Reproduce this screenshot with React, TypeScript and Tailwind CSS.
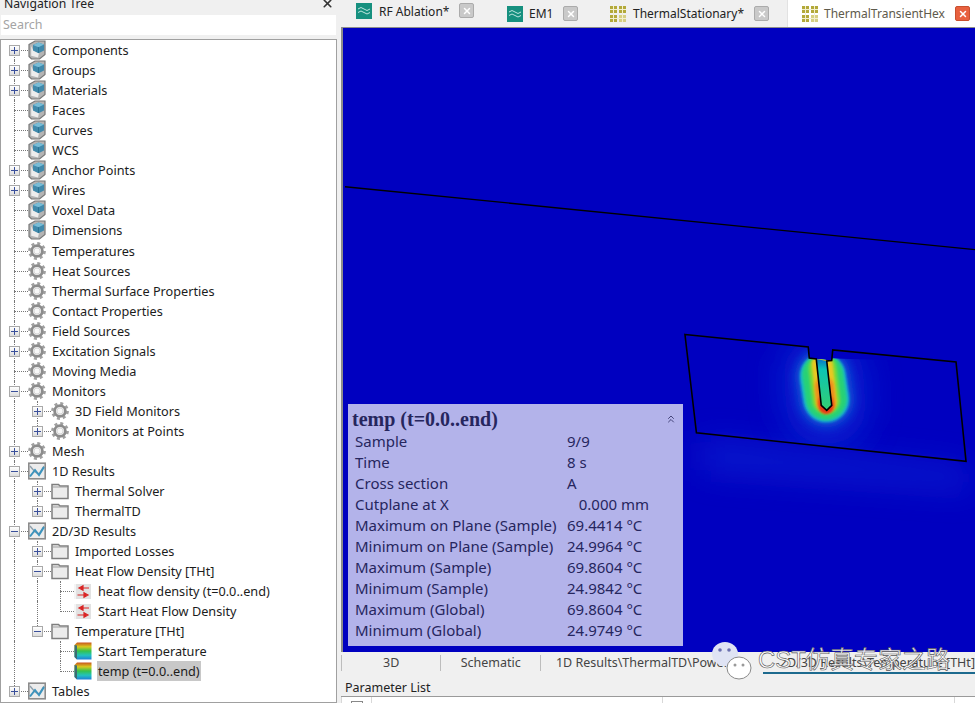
import React from "react";
import { X, ChevronsUp } from "lucide-react";

type IconKind = "cube" | "gear" | "chart" | "folder" | "flow" | "temp";

interface TreeItem {
  label: string;
  level: 0 | 1 | 2;
  icon: IconKind;
  exp?: "+" | "-";
  sub?: "full" | "half";
  leaf?: "full" | "half";
  selected?: boolean;
}

const items: TreeItem[] = [
  { label: "Components", level: 0, icon: "cube", exp: "+" },
  { label: "Groups", level: 0, icon: "cube", exp: "+" },
  { label: "Materials", level: 0, icon: "cube", exp: "+" },
  { label: "Faces", level: 0, icon: "cube" },
  { label: "Curves", level: 0, icon: "cube" },
  { label: "WCS", level: 0, icon: "cube" },
  { label: "Anchor Points", level: 0, icon: "cube", exp: "+" },
  { label: "Wires", level: 0, icon: "cube", exp: "+" },
  { label: "Voxel Data", level: 0, icon: "cube" },
  { label: "Dimensions", level: 0, icon: "cube" },
  { label: "Temperatures", level: 0, icon: "gear" },
  { label: "Heat Sources", level: 0, icon: "gear" },
  { label: "Thermal Surface Properties", level: 0, icon: "gear" },
  { label: "Contact Properties", level: 0, icon: "gear" },
  { label: "Field Sources", level: 0, icon: "gear", exp: "+" },
  { label: "Excitation Signals", level: 0, icon: "gear", exp: "+" },
  { label: "Moving Media", level: 0, icon: "gear" },
  { label: "Monitors", level: 0, icon: "gear", exp: "-" },
  { label: "3D Field Monitors", level: 1, icon: "gear", exp: "+", sub: "full" },
  { label: "Monitors at Points", level: 1, icon: "gear", exp: "+", sub: "half" },
  { label: "Mesh", level: 0, icon: "gear", exp: "+" },
  { label: "1D Results", level: 0, icon: "chart", exp: "-" },
  { label: "Thermal Solver", level: 1, icon: "folder", exp: "+", sub: "full" },
  { label: "ThermalTD", level: 1, icon: "folder", exp: "+", sub: "half" },
  { label: "2D/3D Results", level: 0, icon: "chart", exp: "-" },
  { label: "Imported Losses", level: 1, icon: "folder", exp: "+", sub: "full" },
  { label: "Heat Flow Density [THt]", level: 1, icon: "folder", exp: "-", sub: "full" },
  { label: "heat flow density (t=0.0..end)", level: 2, icon: "flow", sub: "full", leaf: "full" },
  { label: "Start Heat Flow Density", level: 2, icon: "flow", sub: "full", leaf: "half" },
  { label: "Temperature [THt]", level: 1, icon: "folder", exp: "-", sub: "half" },
  { label: "Start Temperature", level: 2, icon: "temp", leaf: "full" },
  { label: "temp (t=0.0..end)", level: 2, icon: "temp", leaf: "half", selected: true },
  { label: "Tables", level: 0, icon: "chart", exp: "+" },
];

const readout = [
  ["Sample", "9/9"],
  ["Time", "8 s"],
  ["Cross section", "A"],
  ["Cutplane at X", "   0.000 mm"],
  ["Maximum on Plane (Sample)", "69.4414 °C"],
  ["Minimum on Plane (Sample)", "24.9964 °C"],
  ["Maximum (Sample)", "69.8604 °C"],
  ["Minimum (Sample)", "24.9842 °C"],
  ["Maximum (Global)", "69.8604 °C"],
  ["Minimum (Global)", "24.9749 °C"],
];

function TreeIcon({ kind }: { kind: IconKind }) {
  if (kind === "cube") {
    return (
      <svg width="18" height="20" viewBox="0 0 18 20">
        <path d="M1 4.5 L7 1 H17 V14.5 L11.5 19 H3.5 L1 16.5 Z" fill="#b4b4b4" stroke="#777777" strokeWidth="1.2" />
        <path d="M3.2 6 V15.8 L10 17.6 L11 13 L5 10 Z" fill="#ededed" />
        <path d="M5 5 L10.5 2.5 L16 4.5 V10.5 L10.5 13.2 L5 10.5 Z" fill="#4089ab" />
        <path d="M5 5 L10.5 7.2 L16 4.5 L10.5 2.5 Z" fill="#78bcd6" />
        <path d="M10.5 7.2 V13" stroke="#2a7394" />
      </svg>
    );
  }
  if (kind === "gear") {
    return (
      <svg width="18" height="18" viewBox="0 0 18 18">
        <circle cx="9" cy="9" r="7.6" fill="none" stroke="#a0a0a0" strokeWidth="2.6" strokeDasharray="3 2.97" />
        <circle cx="9" cy="9" r="5.4" fill="#f0f0f0" stroke="#8c8c8c" strokeWidth="2.8" />
        <circle cx="9" cy="9" r="3" fill="#f8f8f8" stroke="#cfcfcf" strokeWidth="0.8" />
      </svg>
    );
  }
  if (kind === "chart") {
    return (
      <svg width="18" height="18" viewBox="0 0 18 18">
        <rect x="0.8" y="1.2" width="16.4" height="15.6" fill="#ececec" stroke="#8c8c8c" strokeWidth="1.6" />
        <path d="M2 4 L7 10 L11 12 L16 4" fill="none" stroke="#8fa0ac" strokeWidth="1.4" />
        <path d="M2 14.5 L7 8 L11 13 L16 5" fill="none" stroke="#3c93bd" strokeWidth="2" />
      </svg>
    );
  }
  if (kind === "folder") {
    return (
      <svg width="18" height="18" viewBox="0 0 18 18">
        <path d="M1 16.5 V2.5 H7.5 L9 4 H17 V16.5 Z" fill="#ececec" stroke="#7f7f7f" strokeWidth="1.5" />
        <path d="M2 5 H16" stroke="#9d9d9d" />
      </svg>
    );
  }
  if (kind === "flow") {
    return (
      <svg width="18" height="18" viewBox="0 0 18 18">
        <path d="M1 2 H17 V17 H1 Z" fill="#e2e2e2" />
        <path d="M1 2 V17" stroke="#f5f5f5" strokeWidth="2" />
        <path d="M15 6 H8 M5 6 L9 3.8 V8.2 Z" stroke="#d92525" fill="#d92525" strokeWidth="1.2" />
        <path d="M3.5 13 H10 M14 13 L10 10.8 V15.2 Z" stroke="#d92525" fill="#d92525" strokeWidth="1.2" />
      </svg>
    );
  }
  return (
    <svg width="18" height="18" viewBox="0 0 18 18">
      <defs>
        <linearGradient id="rainbow" x1="0" y1="0" x2="0" y2="1">
          <stop offset="0" stopColor="#c9541c" />
          <stop offset="0.25" stopColor="#d8c91e" />
          <stop offset="0.5" stopColor="#35c24c" />
          <stop offset="0.75" stopColor="#22c3bd" />
          <stop offset="1" stopColor="#1f7fd8" />
        </linearGradient>
      </defs>
      <path d="M0.5 3 L3 0.5 H17.5 V17.5 H3 L0.5 15 Z" fill="url(#rainbow)" />
      <path d="M0.5 3 L3 3.5 V17.5 L0.5 15 Z" fill="#3b6d73" />
    </svg>
  );
}

function Expander({ sign }: { sign: "+" | "-" }) {
  return (
    <span className="relative flex h-[11px] w-[11px] items-center justify-center border border-[#a9a9a9] bg-gradient-to-b from-white to-[#dcdcdc]">
      <span className="h-px w-[7px] bg-[#3a4f9a]" />
      {sign === "+" && <span className="absolute h-[7px] w-px bg-[#3a4f9a]" />}
    </span>
  );
}

function TreeRow({ item, index }: { item: TreeItem; index: number }) {
  const isLast = index === items.length - 1;
  const padding = item.level === 0 ? "pl-[27px]" : item.level === 1 ? "pl-[50px]" : "pl-[73px]";
  const connector = item.level === 0 ? "left-[13px]" : item.level === 1 ? "left-[36px]" : "left-[59px]";
  const expanderPos = item.level === 0 ? "left-[8px]" : "left-[31px]";
  const line = "absolute w-0 border-l border-dotted border-[#777]";

  return (
    <div className={`relative flex items-center ${padding} ${index === 9 ? "h-[21px] pb-px" : "h-5"}`}>
      <span className={`${line} left-[13px] ${isLast ? "top-0 h-[11px]" : index === 0 ? "top-[10px] bottom-0" : "inset-y-0"}`} />
      {item.sub && <span className={`${line} left-[36px] top-0 ${item.sub === "half" ? "h-[11px]" : "bottom-0"}`} />}
      {item.leaf && <span className={`${line} left-[59px] top-0 ${item.leaf === "half" ? "h-[11px]" : "bottom-0"}`} />}
      <span className={`absolute top-[10px] h-0 w-[14px] border-t border-dotted border-[#777] ${connector}`} />
      {item.exp && (
        <span className={`absolute top-[5px] ${expanderPos}`}>
          <Expander sign={item.exp} />
        </span>
      )}
      <span className="relative flex w-[18px] items-center justify-center">
        <TreeIcon kind={item.icon} />
      </span>
      <span className={`ml-[5px] h-5 whitespace-nowrap px-px text-[12.7px] leading-5 text-[#1c1c1c] ${item.selected ? "bg-[#c8c8c8]" : ""}`}>
        {item.label}
      </span>
    </div>
  );
}

function WaveIcon() {
  return (
    <svg width="16" height="16" viewBox="0 0 16 16" className="shrink-0">
      <rect width="16" height="16" fill="#16907f" />
      <path d="M2 6 Q5 3 8 6 T14 6 M2 9.5 Q5 6.5 8 9.5 T14 9.5" fill="none" stroke="#bfe6df" strokeWidth="1" />
    </svg>
  );
}

function GridIcon() {
  return (
    <svg width="16" height="16" viewBox="0 0 16 16" className="shrink-0">
      <path d="M0 0 H7 V7 H0 Z M9 0 H16 V7 H9 Z M0 9 H7 V16 H0 Z" fill="#b3a93a" />
      <path d="M9 9 H16 V16 H9 Z" fill="#d6cf83" />
      <path d="M3.5 0 V16 M12.5 0 V16 M0 3.5 H16 M0 12.5 H16" stroke="#f3f0cf" strokeWidth="1" />
    </svg>
  );
}

function CloseBox({ active }: { active?: boolean }) {
  return (
    <span className={`flex h-[15px] w-[15px] shrink-0 items-center justify-center rounded-[2px] border ${active ? "border-[#c9502f] bg-[#e8613f]" : "border-[#ababab] bg-[#c9c9c9]"}`}>
      <X size={10} strokeWidth={3.5} color="#ffffff" />
    </span>
  );
}

function TabBar() {
  return (
    <div className="flex h-[27px] shrink-0 whitespace-nowrap bg-[#f0f0f0] text-[12px] text-[#222]">
      <div className="flex w-[166px] items-start pl-[15px] pt-[3px]">
        <WaveIcon />
        <span className="ml-[7px] w-[80px] leading-[18px]">RF Ablation*</span>
        <CloseBox />
      </div>
      <div className="flex w-[103px] items-start pt-[6px]">
        <WaveIcon />
        <span className="ml-[6px] w-[34px] leading-4">EM1</span>
        <CloseBox />
      </div>
      <div className="flex w-[177px] items-start pt-[6px]">
        <GridIcon />
        <span className="ml-[7px] w-[121px] leading-4">ThermalStationary*</span>
        <CloseBox />
      </div>
      <div className="flex flex-1 items-start border-l border-[#e2e2e2] bg-white pl-[14px] pt-[6px] text-[#5e5a4c]">
        <GridIcon />
        <span className="ml-[6px] w-[131px] leading-4">ThermalTransientHex</span>
        <CloseBox active />
      </div>
    </div>
  );
}

function FieldPlot() {
  const outline = "M684.5 334 L808 346.5 L809 357.5 L816 358.5 L821 405 L826.5 410 L831.5 405 L826.5 360.5 L831.5 360 L832.5 349.5 L956 361.5 L966 461 L696 432.5 Z";
  const region = { filterUnits: "userSpaceOnUse" as const, x: 342, y: 27, width: 633, height: 625 };
  // heat bands around the slot, widest first, each ends in a round cap
  const bands = [
    { d: "M822.5 376 L826 399", w: 56, c: "#0a48d4", f: "url(#b4)" },
    { d: "M822.5 376 L826 399", w: 46, c: "#16b8d0", f: "url(#b15)" },
    { d: "M822.5 374 L826 399", w: 41, c: "#26d276", f: "url(#b15)" },
    { d: "M822.3 368 L826 400", w: 28, c: "#7cda38", f: "url(#b15)" },
    { d: "M822 364 L826 401", w: 21, c: "#e8c820", f: "url(#b1)" },
    { d: "M824 386 L826 403", w: 19, c: "#ee8a1c", f: "url(#b15)" },
    { d: "M825.5 402 L826 406", w: 15, c: "#e63a14", f: "url(#b1)" },
  ];
  return (
    <svg className="absolute inset-0 h-full w-full" viewBox="342 27 633 625" preserveAspectRatio="none">
      <defs>
        <filter id="b1" {...region}><feGaussianBlur stdDeviation="1" /></filter>
        <filter id="b15" {...region}><feGaussianBlur stdDeviation="1.5" /></filter>
        <filter id="b4" {...region}><feGaussianBlur stdDeviation="4" /></filter>
        <filter id="b16" {...region}><feGaussianBlur stdDeviation="16" /></filter>
        <filter id="b20" {...region}><feGaussianBlur stdDeviation="18" /></filter>
        <clipPath id="part">
          <path d="M684.5 334 L808 346.5 L809 357.5 L816 358.5 L831.5 360 L832.5 358 L956 361.5 L966 461 L696 432.5 Z" />
        </clipPath>
        <linearGradient id="slot" x1="0" y1="0" x2="0" y2="1">
          <stop offset="0" stopColor="#0a70c8" />
          <stop offset="0.2" stopColor="#0cc4b4" />
          <stop offset="1" stopColor="#34d070" />
        </linearGradient>
      </defs>
      <rect x="342" y="27" width="633" height="625" fill="#0000c0" />
      <path d="M700 440 L966 468 L975 490 L700 470 Z" fill="#1434dc" opacity="0.5" filter="url(#b16)" />
      <g clipPath="url(#part)">
        <path d="M823 375 L826 405" stroke="#0a30d8" strokeWidth="80" strokeLinecap="round" opacity="0.75" filter="url(#b20)" />
        <g fill="none" strokeLinecap="round">
          {bands.map((b) => (
            <path key={b.c} d={b.d} stroke={b.c} strokeWidth={b.w} filter={b.f} />
          ))}
        </g>
      </g>
      <path d="M816 358.5 L826.5 360.5 L831.5 405 L826.5 410 L821 405 Z" fill="url(#slot)" />
      <path d="M344 186 L975 249" stroke="#000000" strokeWidth="1.3" fill="none" />
      <path d={outline} stroke="#000000" strokeWidth="1.6" fill="none" strokeLinejoin="miter" />
    </svg>
  );
}

function ReadoutPanel() {
  return (
    <div className="absolute left-[5px] top-[376px] h-[242px] w-[335px] bg-[#b3b3ea] pl-[7px] pt-[4px] text-[#26265e]">
      <div className="flex items-center justify-between pr-[6px]">
        <span className="-ml-[3px] text-[20px] font-bold leading-[22px] [font-family:'Liberation_Serif',serif]">temp (t=0.0..end)</span>
        <ChevronsUp size={12} strokeWidth={2} className="text-[#45457a]" />
      </div>
      <div className="mt-[1px] grid grid-cols-[212px_1fr] text-[15px] leading-[21px]">
        {readout.map(([k, v]) => (
          <React.Fragment key={k}>
            <span className="whitespace-nowrap">{k}</span>
            <span className="whitespace-pre">{v}</span>
          </React.Fragment>
        ))}
      </div>
    </div>
  );
}

function Watermark() {
  return (
    <div className="absolute left-[704px] top-[640px] flex items-center">
      <svg width="52" height="46" viewBox="0 0 52 46">
        <ellipse cx="21" cy="14" rx="13" ry="12" fill="#dfe3f4" />
        <ellipse cx="35" cy="28" rx="12" ry="11" fill="#ffffff" stroke="#8a8a8a" strokeWidth="1" />
        <circle cx="16" cy="10" r="1.8" fill="#6a6fb0" />
        <circle cx="25" cy="10" r="1.8" fill="#6a6fb0" />
        <circle cx="31" cy="25" r="1.5" fill="#9a9a9a" />
        <circle cx="39" cy="25" r="1.5" fill="#9a9a9a" />
      </svg>
      <span className="mb-[6px] ml-[2px] whitespace-nowrap text-[24px] leading-[30px] text-white/90 [-webkit-text-stroke:0.6px_#555] [font-family:'Liberation_Sans','Noto_Sans_CJK_SC',sans-serif]">
        CST仿真专家之路
      </span>
    </div>
  );
}

export default function App() {
  return (
    <div className="relative flex h-[703px] w-[975px] overflow-hidden bg-[#f0f0f0] [font-family:'Noto_Sans',sans-serif]">
      <aside className="flex w-[337px] shrink-0 flex-col">
        <div className="flex h-[15px] shrink-0 items-start justify-between overflow-hidden pl-[4px] pr-[3px]">
          <span className="-mt-[3px] text-[12.2px] leading-[14px] text-[#222]">Navigation Tree</span>
          <X size={13} strokeWidth={3} className="-mt-[3px] text-[#333]" />
        </div>
        <div className="mx-px h-[20px] shrink-0 bg-white pl-[2px] text-[12.5px] leading-5 text-[#a4a4a4]">Search</div>
        <div className="mt-[4px] flex-1 border border-[#a0a0a0] bg-white">
          {items.map((item, i) => (
            <TreeRow key={item.label} item={item} index={i} />
          ))}
        </div>
      </aside>
      <main className="ml-[4px] flex min-w-0 flex-1 flex-col">
        <TabBar />
        <div className="relative h-[625px] shrink-0 border-l-2 border-t border-[#8c8c8c]">
          <FieldPlot />
          <ReadoutPanel />
        </div>
        <div className="flex h-[22px] shrink-0 items-center overflow-hidden whitespace-nowrap text-[12.5px] text-[#444]">
          <span className="w-[100px] border-l border-[#bdbdbd] text-center leading-4">3D</span>
          <span className="w-[100px] border-l border-[#bdbdbd] text-center leading-4">Schematic</span>
          <span className="w-[224px] overflow-hidden border-l border-[#bdbdbd] pl-[15px] leading-4">1D Results\ThermalTD\Power</span>
          <span className="relative flex h-[22px] flex-1 items-center pl-[17px]">
            2D/3D Results\Temperature [THt]
            <span className="absolute bottom-0 left-0 right-0 h-[2px] bg-[#1d6a8e]" />
          </span>
        </div>
        <div className="mt-[6px] h-[16px] shrink-0 pl-[4px] text-[12.5px] leading-4 text-[#222]">Parameter List</div>
        <div className="flex flex-1 border-t border-[#9a9a9a] bg-white">
          <div className="flex w-[31px] justify-center border-x border-[#d8d8d8] pt-[4px]">
            <span className="h-3 w-3 border border-[#888]" />
          </div>
          <div className="w-[291px] border-r border-[#d8d8d8]" />
          <div className="w-[292px] border-r border-[#d8d8d8]" />
        </div>
      </main>
      <Watermark />
    </div>
  );
}
